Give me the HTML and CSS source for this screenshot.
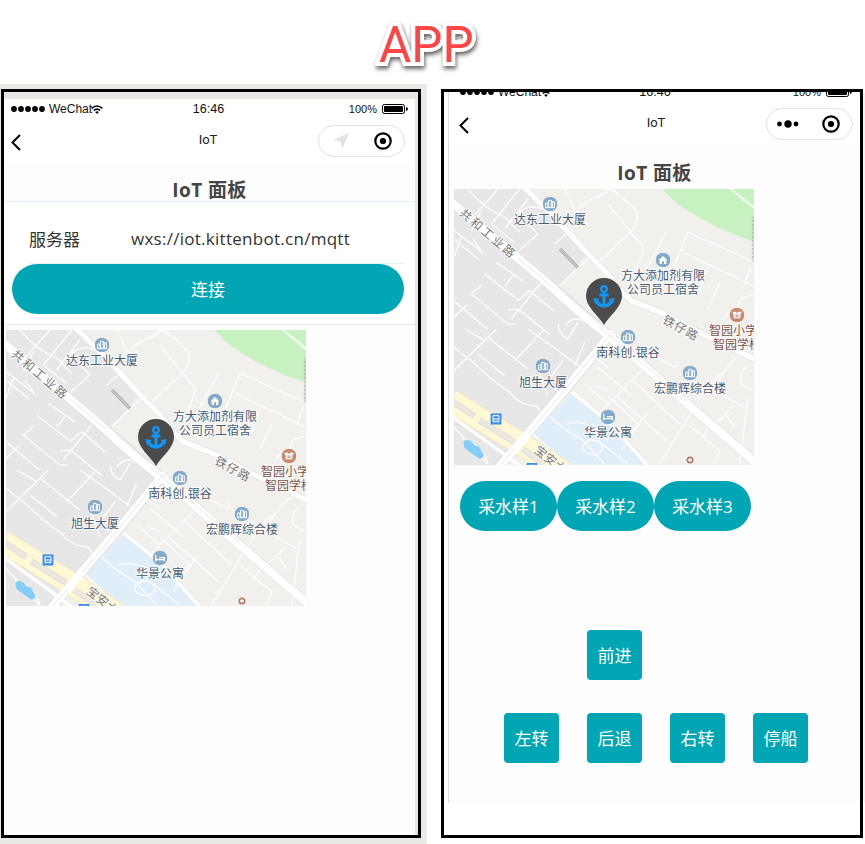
FILE: index.html
```
<!DOCTYPE html>
<html lang="zh-CN">
<head>
<meta charset="utf-8">
<title>APP</title>
<link rel="stylesheet" href="styles.css">
</head>
<body>
<svg class="defs" aria-hidden="true">
  <defs>
    <symbol id="bld" viewBox="0 0 44 44"><circle cx="22" cy="22" r="22" fill="#84a9c9"/><path d="M9 32V19h7v13M18 32V11h8v21M29 32V15h6v17M7 33h30" fill="none" stroke="#fff" stroke-width="3"/></symbol>
    <symbol id="home" viewBox="0 0 44 44"><circle cx="22" cy="22" r="22" fill="#84a9c9"/><path d="M9 23 22 10l13 13h-3v11h-7v-8h-6v8h-7V23z" fill="#fff"/></symbol>
    <symbol id="bed" viewBox="0 0 44 44"><circle cx="22" cy="22" r="22" fill="#84a9c9"/><path d="M9 12v20M9 27h26v5M35 27v-6H19" fill="none" stroke="#fff" stroke-width="4"/></symbol>
    <symbol id="school" viewBox="0 0 44 44"><circle cx="22" cy="22" r="22" fill="#c98a70"/><path d="M9 12h9l4 4 4-4h9v5l-3 3v12H12V20l-3-3z" fill="#fff"/><path d="M17 22h10M17 27h10" stroke="#c98a70" stroke-width="3"/></symbol>
    <symbol id="bus" viewBox="0 0 34 34"><rect width="34" height="34" rx="3" fill="#3d8ee8"/><path d="M8 7h18v17H8zM8 17h18M11 24v4M23 24v4" fill="none" stroke="#fff" stroke-width="3"/></symbol>
    <symbol id="streets" viewBox="0 0 900 828">
      <rect width="900" height="828" fill="#f1f0ed"/>
      <path d="M0 0h212l90 85 105 110-20 12-70 85 120 100 25 50-135 170-185 216H0z" fill="#e7e7e8"/>
      <path d="M627 0q20 25 45 45 50 35 90 55 60 32 132 56l6-5V0z" fill="#c7f1c0"/>
      <path d="M352 615l110 90 105 123H330l-95-98z" fill="#e0eefa"/>
      <g class="minor-edge" id="minor-roads" fill="none" stroke-linejoin="round">
        <g transform="translate(-18 -15)"><path id="m1" d="M60 15q50 60 110 85l45 45M150 15 72 102M100 80l-30 60M215 15 130 120M290 80q-60-40-120 55M130 120l70 55M240 45l-70 90M240 120l30 30-80 70M320 180l35-30M18 140l85 65M18 165l70 58M40 160l-22 60M75 165l30 45M145 235l80 55M195 275l-25 32M110 270l100 78M100 305l-30 25 110 90 25 0M210 350l35-30 70 60M180 380q20-10 40 2l85 70M18 350l100 85M60 360l-42 40M280 295l-90 110M350 15l30 60 20 20M390 75q30-30 90-50M335 305l85-80M350 425q30-35 60-10"/></g>
        <g transform="translate(432 -15)"><path d="M45 15l70 65q10 40-22 70L0 235M0 45q30-50 60-10M30 60l105 130q0 25-25 70M205 145l-60 110M270 145l-45 110M270 145l190 85M255 205l210 100M460 245l-20 55M330 250l-25 75M365 295l-35 80M400 15l68 55M420 375q0-40 45-40M375 405l20-25"/></g>
        <g transform="translate(-18 405)"><path d="M50 15l60 35M145 15 18 140M18 70l50 40M65 105q60 60 120 100 30 40 80 40l15 25M90 90l80 65M120 40l120 95M240 15l160 115M200 110l85-90M330 0q0 30 30 45l30-50M410 55l-30 70M300 215l-35-95M345 110l-45 60 40 45M245 320l110 100M300 270q40 45 100 75l70 75M355 300q70-20 125 50M410 180l70 60M440 185l40 15M18 310l100 110M45 345q60 20 75 75M440 100l40 30"/><ellipse cx="435" cy="370" rx="30" ry="22"/></g>
        <g transform="translate(432 405)"><path d="M0 25l235 105q10-20-5-15M130 140 0 270M0 130l100 85M105 170l140 130M60 220l145 130M30 215l90 85-50 80M145 270l-35 50M300 230l45-60 30-25M315 180l125 70M355 175l50-65 40-25M280 265l-95 155M275 305l90 75-15 40M310 345l25-40 40-25 30-35M345 300l35 20M385 275l25 35M450 130q-30 10-20 50l35 20M450 220l-25 200M0 350l90 70M35 300l120 120"/></g>
      </g>
      <g fill="none" stroke-linejoin="round">
        <g stroke="#dcdcdc">
          <path d="M-10 37 272 275 382 375 510 478 712 655 910 825" stroke-width="28"/>
          <path d="M205-10 302 85 407 200 462 255 492 298 532 335 632 375 732 428 910 515" stroke-width="19"/>
          <path d="M480 430 462 445 327 610 130 840" stroke-width="29"/>
          <path d="M352 608 465 700 590 840" stroke-width="15"/>
        </g>
        <path d="M-10 37 272 275 382 375 510 478 712 655 910 825" stroke="#fff" stroke-width="25"/>
        <path d="M205-10 302 85 407 200 462 255 492 298 532 335 632 375 732 428 910 515" stroke="#fff" stroke-width="16"/>
        <path d="M352 608 465 700 590 840" stroke="#fff" stroke-width="12"/>
        <path d="M-10 635 210 770 330 850" stroke="#f2e4bb" stroke-width="70"/>
        <path d="M-10 635 210 770 330 850" stroke="#fff8d4" stroke-width="66"/>
        <path d="M-10 679 200 832" stroke="#fff" stroke-width="10"/>
        <path d="M-6 636 62 682M76 694 183 760M205 780 270 824" stroke="#dcdad2" stroke-width="18"/>
        <path d="M-6 636 62 682M76 694 183 760M205 780 270 824" stroke="#ebe8e0" stroke-width="14"/>
        <path d="M480 430 462 445 327 610 130 840" stroke="#fff" stroke-width="25"/>
        <path d="M480 430 462 445 327 610 225 733M185 776 130 840M190 205 300 298M432 410 700 638" stroke="#dedede" stroke-width="2"/>
        <path d="M318 180 372 236" stroke="#aaa" stroke-width="10"/>
        <path d="M318 180 372 236" stroke="#ddd" stroke-width="6" stroke-dasharray="2 2"/>
        <path d="M897 85v130" stroke="#b5b5b5" stroke-width="7" stroke-dasharray="2 2"/>
        <path d="M823-5 905 65" stroke="#e0f7dc" stroke-width="5"/>
      </g>
      <path d="M28 762q4-14 22-6l14 14 10 2 14 22q2 16-14 14l-22-16-20-14z" fill="#83cdf7"/>
      <circle cx="708" cy="813" r="8" fill="#fff" stroke="#b77b64" stroke-width="5"/>
      <use href="#bld" x="266" y="23" width="44" height="44"/>
      <use href="#home" x="605" y="191" width="44" height="44"/>
      <use href="#bld" x="500" y="422" width="44" height="44"/>
      <use href="#bld" x="245" y="509" width="44" height="44"/>
      <use href="#bld" x="686" y="530" width="44" height="44"/>
      <use href="#bed" x="440" y="662" width="44" height="44"/>
      <use href="#school" x="827" y="356" width="44" height="44"/>
      <use href="#bus" x="109" y="673" width="34" height="34"/>
      <use href="#bus" x="217" y="822" width="34" height="34"/>
    </symbol>
    <symbol id="pin" viewBox="0 0 36 47">
      <path d="M18 47C12 37 0 29 0 18a18 18 0 0 1 36 0C36 29 24 37 18 47z" fill="#4b4b4b"/>
      <g fill="none" stroke="#1296f5"><circle cx="18" cy="11" r="2.8" stroke-width="2.3"/><path d="M18 14v13M13.5 17h9" stroke-width="3"/><path d="M10 21.5q1.500 6 8 6.500 6.500-.5 8-6.500" stroke-width="3.400"/></g>
      <path d="M7.500 20l6 1-4.500 5zM28.500 20l-6 1 4.500 5z" fill="#1296f5"/>
    </symbol>
    <symbol id="back" viewBox="0 0 10 17"><path d="M9 1 1.500 8.500 9 16" fill="none" stroke="#000" stroke-width="2"/></symbol>
    <symbol id="target" viewBox="0 0 18 18"><circle cx="9" cy="9" r="7.700" fill="none" stroke="#000" stroke-width="2.200"/><circle cx="9" cy="9" r="3.100"/></symbol>
    <symbol id="dots" viewBox="0 0 34 6"><circle cx="3" cy="3" r="2.900"/><circle cx="10" cy="3" r="2.900"/><circle cx="17" cy="3" r="2.900"/><circle cx="24" cy="3" r="2.900"/><circle cx="31" cy="3" r="2.900"/></symbol>
    <symbol id="wifi" viewBox="0 0 12 9"><path d="M.6 3.400Q6-1.300 11.400 3.400M2.700 5.500Q6 2.700 9.300 5.500" fill="none" stroke="#000" stroke-width="1.500"/><path d="M4.200 7 6 9l1.800-2Q6 5.700 4.200 7z"/></symbol>
    <symbol id="battery" viewBox="0 0 26 10"><rect x=".5" y=".5" width="22" height="9" rx="1.800" fill="#fff" stroke="#000"/><rect x="2" y="2" width="19" height="6" rx=".8"/><path d="M24 3q2 .4 2 2t-2 2z"/></symbol>
  </defs>
</svg>

<h1 class="banner">APP</h1>
<main class="shots">
  <section class="backdrop">
    <div class="frame frame-left">
      <div class="screen">
        <div class="status">
          <div class="carrier"><svg class="i-dots"><use href="#dots"/></svg><span>WeChat</span><svg class="i-wifi"><use href="#wifi"/></svg></div>
          <time>16:46</time>
          <div class="power"><span>100%</span><svg class="i-battery"><use href="#battery"/></svg></div>
        </div>
        <div class="nav">
          <svg class="i-back"><use href="#back"/></svg>
          <span class="nav-title">IoT</span>
          <div class="capsule"><svg class="i-arrow" viewBox="0 0 16 16"><path d="M16 0 9 16 7.500 8.500 0 7z" fill="#e2e2e2"/></svg><svg class="i-target"><use href="#target"/></svg></div>
        </div>
        <h2 class="title">IoT 面板</h2>
        <div class="form">
          <div class="field"><label>服务器</label><span class="url">wxs://iot.kittenbot.cn/mqtt</span></div>
          <button class="btn connect">连接</button>
        </div>
        <svg class="map" viewBox="0 0 300 276">
          <use href="#streets" width="300" height="276"/>
          <g class="road"><text transform="translate(12 26) rotate(40)" x="-6" y="4.500" letter-spacing="2">共和工业路</text><text transform="translate(226.500 138.500) rotate(29)" x="-19" y="4.500" letter-spacing="1">铁仔路</text><text transform="translate(87 263) rotate(38)" x="-6" y="4.500">宝安大道</text></g>
          <g class="place"><text x="96" y="35">达东工业大厦</text><text x="209" y="91">方大添加剂有限</text><text x="209" y="105">公司员工宿舍</text><text x="174" y="168">南科创.银谷</text><text x="89" y="197.500">旭生大厦</text><text x="236" y="204">宏鹏辉综合楼</text><text x="154" y="248">华景公寓</text></g>
          <g class="school"><text x="255" y="146">智园小学</text><text x="259" y="160">智园学校</text></g>
          <use href="#pin" x="132" y="89" width="36" height="47"/>
        </svg>
      </div>
    </div>
  </section>
  <section class="second">
    <div class="frame frame-right">
      <div class="screen">
        <div class="status">
          <div class="carrier"><svg class="i-dots"><use href="#dots"/></svg><span>WeChat</span><svg class="i-wifi"><use href="#wifi"/></svg></div>
          <time>16:46</time>
          <div class="power"><span>100%</span><svg class="i-battery"><use href="#battery"/></svg></div>
        </div>
        <div class="nav">
          <svg class="i-back"><use href="#back"/></svg>
          <span class="nav-title">IoT</span>
          <div class="capsule"><svg class="i-more" viewBox="0 0 22 8"><circle cx="2.500" cy="4" r="2.400"/><circle cx="11" cy="4" r="3.700"/><circle cx="19" cy="4" r="2.400"/></svg><svg class="i-target"><use href="#target"/></svg></div>
        </div>
        <h2 class="title">IoT 面板</h2>
        <svg class="map" viewBox="0 0 300 276">
          <use href="#streets" width="300" height="276"/>
          <g class="road"><text transform="translate(12 26) rotate(40)" x="-6" y="4.500" letter-spacing="2">共和工业路</text><text transform="translate(226.500 138.500) rotate(29)" x="-19" y="4.500" letter-spacing="1">铁仔路</text><text transform="translate(87 263) rotate(38)" x="-6" y="4.500">宝安大道</text></g>
          <g class="place"><text x="96" y="35">达东工业大厦</text><text x="209" y="91">方大添加剂有限</text><text x="209" y="105">公司员工宿舍</text><text x="174" y="168">南科创.银谷</text><text x="89" y="197.500">旭生大厦</text><text x="236" y="204">宏鹏辉综合楼</text><text x="154" y="248">华景公寓</text></g>
          <g class="school"><text x="255" y="146">智园小学</text><text x="259" y="160">智园学校</text></g>
          <use href="#pin" x="132" y="89" width="36" height="47"/>
        </svg>
        <div class="samples"><button class="btn">采水样1</button><button class="btn">采水样2</button><button class="btn">采水样3</button></div>
        <div class="pad"><button class="btn forward">前进</button><button class="btn">左转</button><button class="btn">后退</button><button class="btn">右转</button><button class="btn">停船</button></div>
      </div>
    </div>
    <div class="edge"></div>
  </section>
</main>
</body>
</html>
```
FILE: styles.css
```
* { box-sizing: border-box; }
html, body { margin: 0; background: #fff; }
body { width: 865px; height: 844px; overflow: hidden; font-family: "Open Sans", "Noto Sans CJK SC", sans-serif; color: #333; }
svg { display: block; flex: none; }
.defs { position: absolute; width: 0; height: 0; }

.banner {
  margin: 0; height: 84px; padding: 16px 0 0 379px;
  font: 400 49.500px/58px Roboto, sans-serif; color: #ff4545;
  -webkit-text-stroke: 8px #fff; paint-order: stroke fill;
  filter: drop-shadow(1px 3px 2px rgba(0, 0, 0, .6));
}
.shots { display: flex; height: 760px; }
.backdrop { width: 427px; padding: 5px 0 0 1px; background: #ebe9e5; }
.second { display: flex; padding: 5px 0 0 14px; }
.edge { width: 2px; height: 710px; margin-top: 4px; background: #f3f3f3; }
.frame { height: 749px; border: 3px solid #000; overflow: hidden; }
.frame-left { width: 420px; padding-top: 7px; background: #e6e6e2; }
.frame-right { width: 422px; padding-left: 4px; background: #fff; }
.screen { background: #fdfdfd; overflow: hidden; }
.frame-left .screen { width: 411px; height: 736px; }
.frame-right .screen { height: 711px; border-left: 1px solid #ddd; }

.status { display: grid; grid-template-columns: 1fr auto 1fr; align-items: center; height: 20px; padding: 0 7px; background: #fff; font: 12px/20px "Liberation Sans", sans-serif; color: #111; }
.frame-right .status { margin-top: -10px; padding: 0 8px 0 11px; }
.carrier, .power { display: flex; align-items: center; }
.carrier span { margin-left: 4px; }
.power { justify-content: flex-end; gap: 5px; }
.power span { font-size: 11px; }
.status time { font-size: 12.500px; margin-left: -2px; }
.i-dots { width: 34px; height: 6px; }
.i-wifi { width: 12px; height: 9px; margin-left: -1px; }
.i-battery { width: 26px; height: 10px; }

.nav { display: grid; grid-template-columns: 1fr auto 1fr; align-items: center; height: 44px; padding: 0 10px 0 7px; background: #fff; }
.frame-right .nav { padding: 0 7px 0 10px; }
.i-back { width: 10px; height: 17px; margin-top: 2px; }
.nav-title { font: 400 13px/20px Roboto, sans-serif; color: #222; margin-top: -2px; }
.capsule { justify-self: end; display: flex; align-items: center; justify-content: space-between; width: 87px; height: 32px; padding: 0 12px 0 14px; border: 1px solid #e2e2e2; border-radius: 16px; }
.frame-right .capsule { padding-left: 10px; }
.i-arrow { width: 16px; height: 16px; }
.i-target { width: 18px; height: 18px; }
.i-more { width: 22px; height: 8px; }

.title { margin: 0; height: 38px; padding-top: 13px; font-size: 19px; line-height: 28px; letter-spacing: .4px; text-align: center; color: #454545; }
.frame-right .title { height: 43px; }
.form { height: 124px; padding: 0 11px 0 8px; background: #fff; border-top: 1px solid #e5eff3; border-bottom: 1px solid #e5eff3; }
.field { display: flex; align-items: center; height: 62px; margin-left: 17px; padding-top: 12px; border-bottom: 1px solid #e5eff3; font-size: 17px; }
.field label { width: 102px; }
.url { white-space: nowrap; letter-spacing: .27px; }
.btn { display: flex; align-items: center; justify-content: center; height: 50px; padding: 2px 0 0; border: 0; background: #00a6b4; color: #fff; font: 17px/24px "Open Sans", "Noto Sans CJK SC", sans-serif; }
.connect { width: 392px; border-radius: 25px; }
.map { width: 300px; height: 276px; margin: 5px 0 0 2px; overflow: hidden; }
.frame-right .map { margin: 0 0 0 5px; }
.map text { font: 12px "Noto Sans CJK SC", sans-serif; paint-order: stroke; stroke: rgba(255, 255, 255, .8); stroke-width: 2px; }
.place text { fill: #465a75; text-anchor: middle; }
.school text { fill: #81503f; }
.road text { fill: #777; }
.minor-edge { stroke: #fbfbfb; stroke-width: 4.500; }

.samples { display: flex; margin: 16px 0 0 11px; }
.samples .btn { width: 97px; border-radius: 25px; }
.pad { display: grid; grid-template-columns: 55px 55px 55px 55px; column-gap: 28px; row-gap: 33px; margin: 99px 0 0 55px; }
.pad .btn { border-radius: 4px; }
.forward { grid-column: 2; }
.forward + .btn { grid-column: 1; }
```
